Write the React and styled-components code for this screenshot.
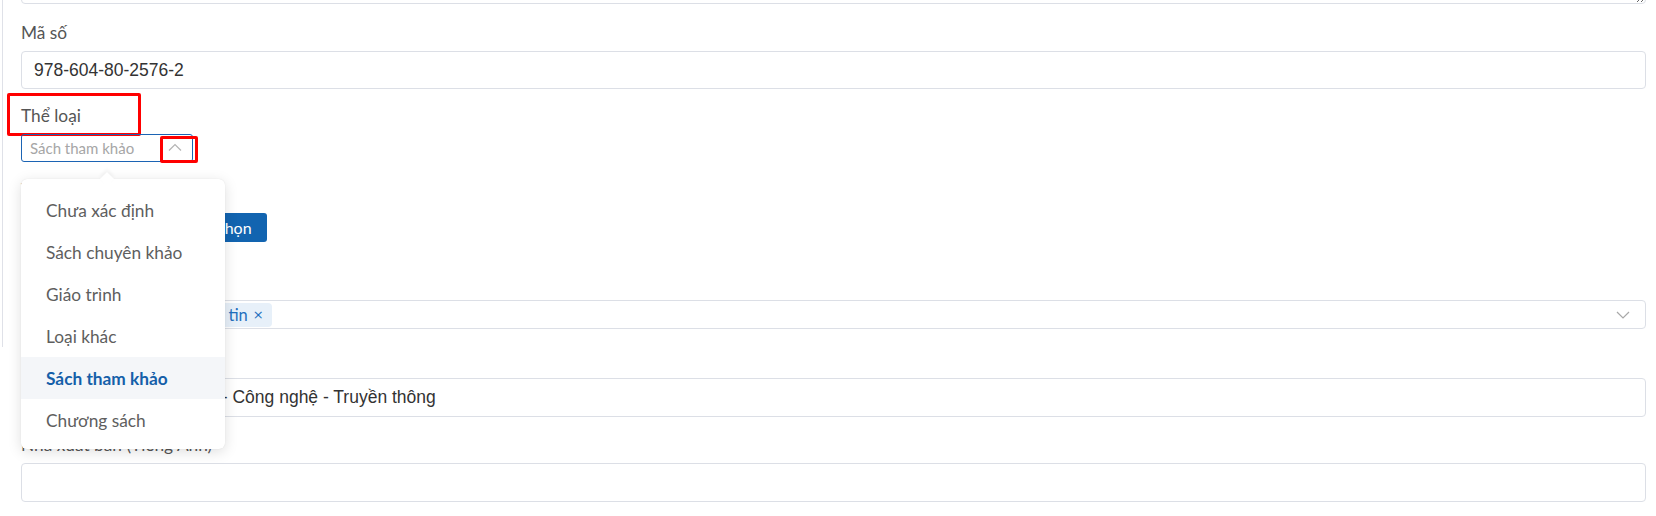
import React from 'react';
import styled, { createGlobalStyle } from 'styled-components';

const GlobalStyle = createGlobalStyle`
    html, body {
        margin: 0;
        padding: 0;
        background: #ffffff;
        overflow: hidden;
    }
    body {
        font-family: "Lato", "Noto Sans", sans-serif;
    }
`;

const options = ['Chưa xác định', 'Sách chuyên khảo', 'Giáo trình', 'Loại khác', 'Sách tham khảo', 'Chương sách'];

const ChevronUp = () => (
    <svg width="14" height="8" viewBox="0 0 14 8" fill="none">
        <path d="M1 7.5L7 1.5L13 7.5" stroke="#b4b4b4" strokeWidth="1.2" />
    </svg>
);

const ChevronDown = () => (
    <svg width="14" height="8" viewBox="0 0 14 8" fill="none">
        <path d="M1 1L7 7L13 1" stroke="#a8a8a8" strokeWidth="1.2" />
    </svg>
);

export default function App() {
    return (
        <Page>
            <GlobalStyle />
            <Rail />
            <Form>
                <TopArea defaultValue="" />

                <Field $top={17}>
                    <Label>Mã số</Label>
                    <Input>978-604-80-2576-2</Input>
                </Field>

                <Field $top={15}>
                    <Label>
                        Thể loại
                        <Marker $left={-14} $top={-11} $w={134} $h={43} />
                    </Label>
                    <SelectWrap>
                        <Select>
                            <Placeholder>Sách tham khảo</Placeholder>
                            <Arrow><ChevronUp /></Arrow>
                            <Marker $left={138} $top={1} $w={38} $h={27} />
                        </Select>
                        <Menu>
                            {options.map(o => (
                                <Option key={o} $active={o === 'Sách tham khảo'}>{o}</Option>
                            ))}
                        </Menu>
                    </SelectWrap>
                </Field>

                <Field $top={16}>
                    <Label>Tệp đính kèm</Label>
                    <FileRow>
                        <FileBox />
                        <Button>Chọn</Button>
                    </FileRow>
                </Field>

                <Field $top={28}>
                    <Label>Lĩnh vực</Label>
                    <Multi>
                        <Tag>Tin <Close>×</Close></Tag>
                        <Tag>Công nghệ thông tin <Close>×</Close></Tag>
                        <MultiArrow><ChevronDown /></MultiArrow>
                    </Multi>
                </Field>

                <Field $top={19}>
                    <Label>Nhà xuất bản</Label>
                    <Input $tall>Nhà xuất bản Khoa học - Công nghệ - Truyền thông</Input>
                </Field>

                <Field $top={16}>
                    <Label>Nhà xuất bản (Tiếng Anh)</Label>
                    <Input $tall />
                </Field>
            </Form>
        </Page>
    );
}

const Page = styled.div`
    display: flex;
    align-items: flex-start;
    width: 1656px;
    height: 516px;
    overflow: hidden;
`;

const Rail = styled.div`
    flex: 0 0 3px;
    height: 347px;
    border-right: 1px solid #dfe1e8;
    box-sizing: border-box;
`;

const Form = styled.div`
    flex: 1;
    padding: 0 10px 0 18px;
`;

const TopArea = styled.textarea`
    display: block;
    box-sizing: border-box;
    width: 100%;
    height: 60px;
    margin-top: -56px;
    border: 1px solid #dcdfe6;
    border-radius: 4px;
    resize: vertical;
    outline: none;
`;

const Field = styled.div`
    margin-top: ${p => p.$top}px;
`;

const Label = styled.div`
    position: relative;
    display: inline-block;
    font-size: 17.3px;
    line-height: 24px;
    color: #555555;
    margin-bottom: 6px;
`;

const Marker = styled.span`
    position: absolute;
    left: ${p => p.$left}px;
    top: ${p => p.$top}px;
    width: ${p => p.$w}px;
    height: ${p => p.$h}px;
    border: 3px solid #ff0000;
    border-radius: 2px;
    box-sizing: border-box;
    pointer-events: none;
`;

const Input = styled.div`
    box-sizing: border-box;
    height: ${p => (p.$tall ? 39 : 38)}px;
    border: 1px solid #dcdfe6;
    border-radius: 4px;
    padding: 0 12px;
    display: flex;
    align-items: center;
    font-family: "Liberation Sans", Arial, sans-serif;
    font-size: 17.5px;
    color: #333333;
    white-space: nowrap;
`;

const SelectWrap = styled.div`
    position: relative;
    z-index: 5;
    width: 172px;
`;

const Select = styled.div`
    position: relative;
    box-sizing: border-box;
    height: 28px;
    border: 1px solid #1c64b4;
    border-radius: 3px;
    display: flex;
    align-items: center;
    padding: 0 0 0 8px;
`;

const Placeholder = styled.span`
    flex: 1;
    font-size: 15px;
    color: #a6a6a6;
`;

const Arrow = styled.span`
    display: flex;
    align-items: center;
    width: 26px;
    margin-right: 4px;
    justify-content: center;
    padding-bottom: 2px;
`;

const Menu = styled.div`
    position: absolute;
    left: 0;
    top: 45px;
    width: 204px;
    box-sizing: border-box;
    padding: 10px 0 8px;
    background: #ffffff;
    border-radius: 6px;
    box-shadow: 0 3px 14px rgba(0, 0, 0, 0.13), 0 0 1px rgba(0, 0, 0, 0.12);

    &::before {
        content: "";
        position: absolute;
        left: 81px;
        top: -5px;
        width: 10px;
        height: 10px;
        background: #ffffff;
        transform: rotate(45deg);
        box-shadow: -2px -2px 4px rgba(0, 0, 0, 0.05);
    }
`;

const Option = styled.div`
    position: relative;
    height: 42px;
    display: flex;
    align-items: center;
    padding-left: 25px;
    font-size: 17.3px;
    color: ${p => (p.$active ? '#155fa9' : '#5e5e5e')};
    font-weight: ${p => (p.$active ? 700 : 400)};
    background: ${p => (p.$active ? '#f4f6f9' : 'transparent')};
`;

const FileRow = styled.div`
    display: flex;
    gap: 8px;
    margin-top: 5px;
`;

const FileBox = styled.div`
    width: 170px;
    height: 29px;
    box-sizing: border-box;
    border: 1px solid #dcdfe6;
    border-radius: 3px;
`;

const Button = styled.button`
    height: 29px;
    padding: 0 15px;
    border: none;
    border-radius: 3px;
    background: #1264b0;
    color: #ffffff;
    font-family: "Lato", "Noto Sans", sans-serif;
    font-size: 16px;
`;

const Multi = styled.div`
    box-sizing: border-box;
    height: 29px;
    border: 1px solid #dcdfe6;
    border-radius: 4px;
    display: flex;
    align-items: center;
    gap: 4px;
    padding: 0 3px 0 11px;
`;

const Tag = styled.span`
    height: 24px;
    display: inline-flex;
    align-items: center;
    gap: 5px;
    padding: 0 8px;
    border-radius: 4px;
    background: #e7f0f9;
    color: #1f6fbe;
    font-size: 16.5px;
    white-space: nowrap;
`;

const Close = styled.span`
    font-family: "DejaVu Sans", sans-serif;
    font-size: 13px;
`;

const MultiArrow = styled.span`
    margin-left: auto;
    margin-right: 12px;
    display: flex;
`;
